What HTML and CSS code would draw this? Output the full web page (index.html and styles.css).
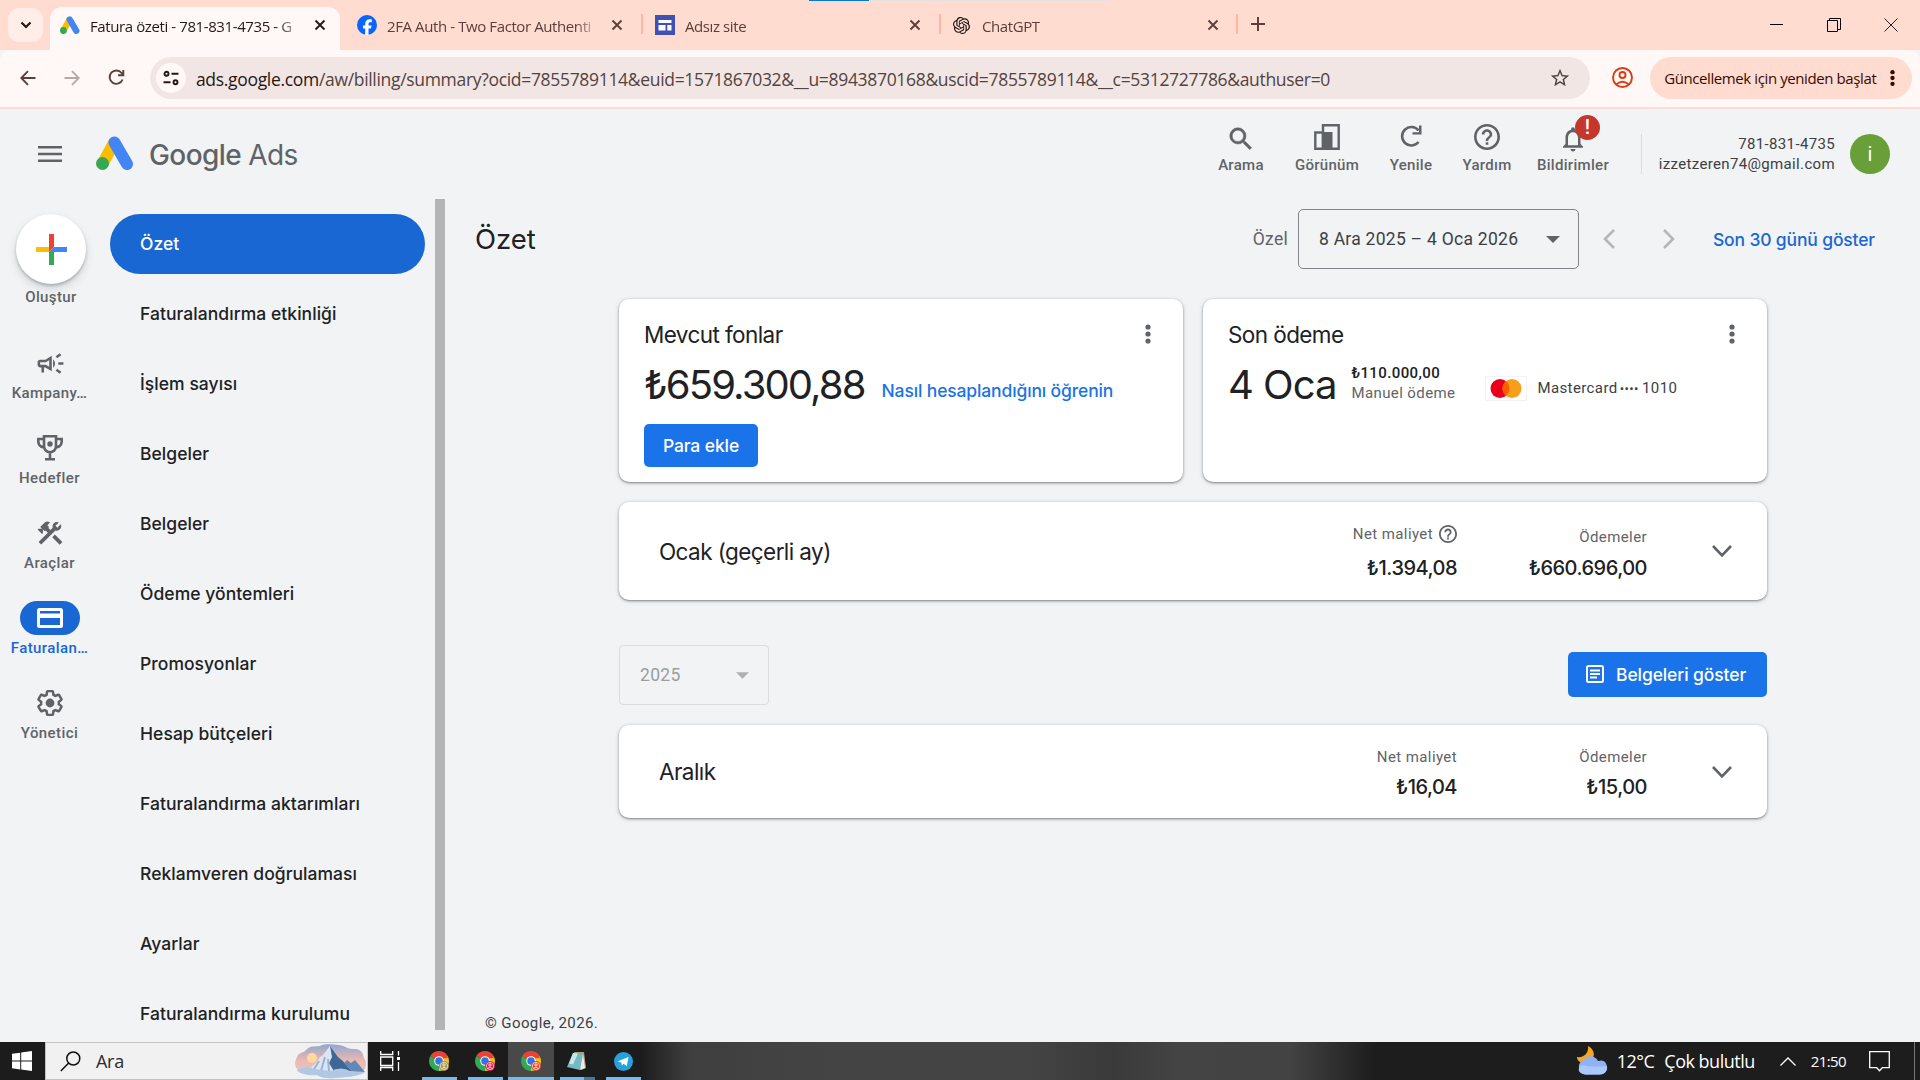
FILE: index.html
```html
<!DOCTYPE html>
<html lang="tr">

<head>
    <meta charset="UTF-8">
    <title>Fatura özeti - 781-831-4735 - Google Ads</title>
    <link rel="stylesheet" href="styles.css">
</head>

<body>

    <!-- Shared icons -->
    <svg class="defs" width="0" height="0">
        <symbol id="ads" viewBox="0 0 38 34">
            <path d="M19 5 L7 27" stroke="#fbbc04" stroke-width="12" />
            <path d="M18.5 6.5 L31 28" stroke="#4285f4" stroke-width="12" stroke-linecap="round" />
            <circle cx="6.5" cy="27.5" r="6.5" fill="#34a853" />
        </symbol>
        <symbol id="close" viewBox="0 0 12 12">
            <path d="M1.5 1.5l9 9M10.5 1.5l-9 9" stroke="currentColor" stroke-width="1.9" fill="none" />
        </symbol>
        <symbol id="more" viewBox="0 0 6 20">
            <circle cx="3" cy="3" r="2.6" fill="currentColor" />
            <circle cx="3" cy="10" r="2.6" fill="currentColor" />
            <circle cx="3" cy="17" r="2.6" fill="currentColor" />
        </symbol>
        <symbol id="help" viewBox="2 2 20 20">
            <path fill="currentColor" d="M11 18h2v-2h-2v2zm1-16C6.48 2 2 6.48 2 12s4.48 10 10 10 10-4.48 10-10S17.52 2 12 2zm0 18c-4.41 0-8-3.59-8-8s3.59-8 8-8 8 3.59 8 8-3.59 8-8 8zm0-14c-2.21 0-4 1.79-4 4h2c0-1.1.9-2 2-2s2 .9 2 2c0 2-3 1.75-3 5h2c0-2.25 3-2.5 3-5 0-2.21-1.79-4-4-4z" />
        </symbol>
        <symbol id="expand" viewBox="0 0 22 14">
            <path d="M2 2l9 9.3L20 2" stroke="currentColor" stroke-width="2.6" fill="none" />
        </symbol>
        <symbol id="chrome" viewBox="0 0 20 20">
            <path d="M10 10 L1.34 5 A10 10 0 0 1 18.66 5 Z" fill="#ea4335" />
            <path d="M10 10 L18.66 5 A10 10 0 0 1 10 20 Z" fill="#fbc116" />
            <path d="M10 10 L10 20 A10 10 0 0 1 1.34 5 Z" fill="#34a853" />
            <path d="M10 5.2h8.7v2H10z" fill="#ea4335" />
            <circle cx="10" cy="10" r="4.8" fill="#fff" />
            <circle cx="10" cy="10" r="3.8" fill="#2f74ec" />
            <circle cx="15" cy="15" r="5" fill="currentColor" />
            <circle cx="15" cy="15" r="3.7" fill="none" stroke="#fff" stroke-width=".8" opacity=".8" />
            <circle cx="15" cy="14" r="1.2" fill="none" stroke="#fff" stroke-width=".8" />
            <path d="M12.8 17.4q2.2-2 4.4 0" fill="none" stroke="#fff" stroke-width=".8" />
        </symbol>
    </svg>

    <!-- Browser tabs -->
    <div class="tab-strip">
        <div class="load-bar"></div>
        <div class="tab-search">
            <svg width="12" height="8" viewBox="0 0 12 8"><path d="M1.5 1.5L6 6l4.5-4.5" stroke="#271815" stroke-width="2.2" fill="none" /></svg>
        </div>
        <div class="tab active">
            <svg class="favicon" width="20" height="18"><use href="#ads" /></svg>
            <span class="tab-title">Fatura özeti - 781-831-4735 - G</span>
            <svg class="tab-close" width="12" height="12"><use href="#close" /></svg>
        </div>
        <div class="tab">
            <svg class="favicon" width="20" height="20" viewBox="0 0 20 20">
                <circle cx="10" cy="10" r="10" fill="#0866ff" />
                <path d="M8.2 20v-6.6H6v-3h2.2V9c0-3.3 1.5-4.8 4.7-4.8.6 0 1.4.1 1.9.2v2.8h-1.3c-1.5 0-2 .6-2 2v1.2h3l-.5 3h-2.5V20z" fill="#fff" />
            </svg>
            <span class="tab-title">2FA Auth - Two Factor Authenti</span>
            <svg class="tab-close" width="12" height="12"><use href="#close" /></svg>
        </div>
        <div class="tab separated">
            <svg class="favicon" width="20" height="20" viewBox="0 0 20 20">
                <path d="M0 0h20v20H0z" fill="#3f51b5" />
                <path d="M3.5 5h13v3h-13zM3.5 10h7v5.5h-7zM12.3 10h4.2v5.5h-4.2z" fill="#fff" />
            </svg>
            <span class="tab-title">Adsız site</span>
            <svg class="tab-close" width="12" height="12"><use href="#close" /></svg>
        </div>
        <div class="tab separated">
            <svg class="favicon gpt" width="17" height="17" viewBox="0 0 24 24"><path d="M22.2819 9.8211a5.9847 5.9847 0 0 0-.5157-4.9108 6.0462 6.0462 0 0 0-6.5098-2.9A6.0651 6.0651 0 0 0 4.9807 4.1818a5.9847 5.9847 0 0 0-3.9977 2.9 6.0462 6.0462 0 0 0 .7427 7.0966 5.98 5.98 0 0 0 .511 4.9107 6.051 6.051 0 0 0 6.5146 2.9001A5.9847 5.9847 0 0 0 13.2599 24a6.0557 6.0557 0 0 0 5.7718-4.2058 5.9894 5.9894 0 0 0 3.9977-2.9001 6.0557 6.0557 0 0 0-.7475-7.0729zm-9.022 12.6081a4.4755 4.4755 0 0 1-2.8764-1.0408l.1419-.0804 4.7783-2.7582a.7948.7948 0 0 0 .3927-.6813v-6.7369l2.02 1.1686a.071.071 0 0 1 .038.052v5.5826a4.504 4.504 0 0 1-4.4945 4.4944zm-9.6607-4.1254a4.4708 4.4708 0 0 1-.5346-3.0137l.142.0852 4.783 2.7582a.7712.7712 0 0 0 .7806 0l5.8428-3.3685v2.3324a.0804.0804 0 0 1-.0332.0615L9.74 19.9502a4.4992 4.4992 0 0 1-6.1408-1.6464zM2.3408 7.8956a4.485 4.485 0 0 1 2.3655-1.9728V11.6a.7664.7664 0 0 0 .3879.6765l5.8144 3.3543-2.0201 1.1685a.0757.0757 0 0 1-.071 0l-4.8303-2.7865A4.504 4.504 0 0 1 2.3408 7.872zm16.5963 3.8558L13.1038 8.364 15.1192 7.2a.0757.0757 0 0 1 .071 0l4.8303 2.7913a4.4944 4.4944 0 0 1-.6765 8.1042v-5.6772a.79.79 0 0 0-.407-.667zm2.0107-3.0231l-.142-.0852-4.7735-2.7818a.7759.7759 0 0 0-.7854 0L9.409 9.2297V6.8974a.0662.0662 0 0 1 .0284-.0615l4.8303-2.7866a4.4992 4.4992 0 0 1 6.6802 4.66zM8.3065 12.863l-2.02-1.1638a.0804.0804 0 0 1-.038-.0567V6.0742a4.4992 4.4992 0 0 1 7.3757-3.4537l-.142.0805L8.704 5.459a.7948.7948 0 0 0-.3927.6813zm1.0976-2.3654l2.602-1.4998 2.6069 1.4998v2.9994l-2.5974 1.4997-2.6067-1.4997Z" fill="#111" /></svg>
            <span class="tab-title">ChatGPT</span>
            <svg class="tab-close" width="12" height="12"><use href="#close" /></svg>
        </div>
        <div class="new-tab">
            <svg width="14" height="14" viewBox="0 0 14 14"><path d="M7 0v14M0 7h14" stroke="#5a403a" stroke-width="2" /></svg>
        </div>
        <div class="window-buttons">
            <svg width="14" height="14" viewBox="0 0 14 14"><path d="M0 6.5h13" stroke="#000" /></svg>
            <svg width="14" height="14" viewBox="0 0 14 14"><path d="M.5 2.5h10v11H.5zM2.5 2.5v-2h11v11h-3" stroke="#000" fill="none" /></svg>
            <svg width="14" height="14" viewBox="0 0 14 14"><path d="M.5.5l13 13M13.5.5l-13 13" stroke="#222" fill="none" /></svg>
        </div>
    </div>

    <!-- Address bar -->
    <div class="toolbar">
        <div class="nav-buttons">
            <svg width="16" height="16" viewBox="0 0 16 16"><path d="M15.5 8H1.5M8 1.2L1.3 8 8 14.8" stroke="#5a403a" stroke-width="1.9" fill="none" /></svg>
            <svg width="16" height="16" viewBox="0 0 16 16"><path d="M.5 8h14M8 1.2L14.7 8 8 14.8" stroke="#b9a9a5" stroke-width="1.9" fill="none" /></svg>
            <svg width="17" height="17" viewBox="0 0 17 17"><path d="M14.6 10.5A6.7 6.7 0 1 1 13.6 4L15 5.6" stroke="#5a403a" stroke-width="1.9" fill="none" /><path d="M15.3 1v5.2H10" stroke="#5a403a" stroke-width="1.9" fill="none" /></svg>
        </div>
        <div class="omnibox">
            <div class="site-info">
                <svg width="16" height="16" viewBox="0 0 16 16" fill="none" stroke="#271815" stroke-width="1.9"><circle cx="3.5" cy="3.8" r="2" /><path d="M8.5 3.8h7M.5 12.2h7" /><circle cx="12.5" cy="12.2" r="2" /></svg>
            </div>
            <span class="url"><b>ads.google.com</b>/aw/billing/summary?ocid=7855789114&amp;euid=1571867032&amp;__u=8943870168&amp;uscid=7855789114&amp;__c=5312727786&amp;authuser=0</span>
            <svg class="star" width="22" height="22" viewBox="0 0 24 24"><path d="M22 9.24l-7.19-.62L12 2 9.19 8.63 2 9.24l5.46 4.73L5.82 21 12 17.27 18.18 21l-1.63-7.03L22 9.24zM12 15.4l-3.76 2.27 1-4.28-3.32-2.88 4.38-.38L12 6.1l1.71 4.04 4.38.38-3.32 2.88 1 4.28L12 15.4z" fill="#534340" /></svg>
        </div>
        <svg class="profile" width="21" height="21" viewBox="0 0 21 21" fill="none" stroke="#dd3c12" stroke-width="1.9"><circle cx="10.5" cy="10.5" r="9.5" /><circle cx="10.5" cy="8" r="3" /><path d="M4.5 17.2q6-5 12 0" /></svg>
        <div class="update-button">
            <span>Güncellemek için yeniden başlat</span>
            <svg width="5" height="18" viewBox="0 0 6 20"><use href="#more" /></svg>
        </div>
    </div>

    <!-- Google Ads header -->
    <header class="header">
        <svg class="menu-icon" width="24" height="16" viewBox="0 0 24 16"><path d="M0 1.3h24M0 8h24M0 14.7h24" stroke="#5f6368" stroke-width="2.5" /></svg>
        <svg class="logo" width="38" height="34"><use href="#ads" /></svg>
        <div class="brand"><span>Google</span> Ads</div>
        <div class="actions">
            <div class="action search">
                <svg width="30" height="30" viewBox="0 0 24 24"><path d="M15.5 14h-.79l-.28-.27A6.471 6.471 0 0 0 16 9.5 6.5 6.5 0 1 0 9.5 16c1.61 0 3.09-.59 4.23-1.57l.27.28v.79l5 4.99L20.49 19l-4.99-5zm-6 0C7.01 14 5 11.99 5 9.5S7.01 5 9.5 5 14 7.01 14 9.5 11.99 14 9.5 14z" fill="#5f6368" stroke="#5f6368" stroke-width=".4" /></svg>
                <span>Arama</span>
            </div>
            <div class="action view">
                <svg width="26" height="26" viewBox="0 0 26 26"><path d="M1.3 8.5h7.5v16.2H1.3zM9 1.3h15.7v23.4H9z" stroke="#5f6368" stroke-width="2.4" fill="none" /><path d="M9 8h9.500v17H9z" fill="#5f6368" /></svg>
                <span>Görünüm</span>
            </div>
            <div class="action refresh">
                <svg width="24" height="24" viewBox="0 0 24 24"><path d="M19.5 18A9.2 9.2 0 1 1 19.5 6.500" stroke="#5f6368" stroke-width="2.6" fill="none" /><path d="M22.5 1.5v9h-9v-2.3h6.5V1.5z" fill="#5f6368" /></svg>
                <span>Yenile</span>
            </div>
            <div class="action assist">
                <svg width="26" height="26"><use href="#help" /></svg>
                <span>Yardım</span>
            </div>
            <div class="action notifications">
                <svg width="30" height="30" viewBox="0 0 24 24"><path d="M12 22c1.1 0 2-.9 2-2h-4c0 1.1.89 2 2 2zm6-6v-5c0-3.07-1.64-5.64-4.5-6.32V4c0-.83-.67-1.5-1.5-1.5s-1.5.67-1.5 1.5v.68C7.63 5.36 6 7.92 6 11v5l-2 2v1h16v-1l-2-2zm-2 1H8v-6c0-2.48 1.51-4.5 4-4.5s4 2.02 4 4.5v6z" fill="#5f6368" /></svg>
                <span>Bildirimler</span>
                <i class="badge">!</i>
            </div>
        </div>
        <div class="account">
            <div>781-831-4735</div>
            <div class="mail">izzetzeren74@gmail.com</div>
        </div>
        <div class="avatar">i</div>
    </header>

    <div class="page">

        <!-- Icon rail -->
        <nav class="rail">
            <div class="create">
                <svg width="31" height="31" viewBox="0 0 31 31">
                    <path d="M0 13h13v5H0z" fill="#fbbc04" />
                    <path d="M13 18h5v13h-5z" fill="#34a853" />
                    <path d="M13 18l5-5h13v5z" fill="#4285f4" />
                    <path d="M13 0h5v13l-5 5z" fill="#ea4335" />
                </svg>
            </div>
            <span class="create-label">Oluştur</span>
            <div class="rail-item">
                <div class="rail-icon"><svg width="31" height="31" viewBox="0 0 24 24"><path d="M18 11v2h4v-2h-4zm-2 6.61c.96.71 2.21 1.65 3.2 2.39.4-.53.8-1.07 1.2-1.6-.99-.74-2.24-1.68-3.2-2.4-.4.54-.8 1.08-1.2 1.61zM20.4 5.6c-.4-.53-.8-1.07-1.2-1.6-.99.74-2.24 1.68-3.2 2.4.4.53.8 1.07 1.2 1.6.96-.72 2.21-1.65 3.2-2.4zM4 9c-1.1 0-2 .9-2 2v2c0 1.1.9 2 2 2h1v4h2v-4h1l5 3V6L8 9H4zm5.03 1.71L11 9.53v4.94l-1.97-1.18-.48-.29H4v-2h4.55l.48-.29zM15.5 12c0-1.33-.58-2.53-1.5-3.35v6.69c.92-.81 1.5-2.01 1.5-3.34z" fill="currentColor" /></svg></div>
                <span>Kampany…</span>
            </div>
            <div class="rail-item">
                <div class="rail-icon"><svg width="26" height="26" viewBox="0 0 26 26" fill="none" stroke="currentColor" stroke-width="2.6"><path d="M7 1.3h12v10a6 6 0 0 1-12 0zM7 4H1.3v2.5Q1.3 11.5 7 12.500M19 4h5.700v2.500q0 5-5.700 6M13 17.500V24M8 24.300h10" /><circle cx="13" cy="9" r="2.700" fill="currentColor" stroke="none" /></svg></div>
                <span>Hedefler</span>
            </div>
            <div class="rail-item">
                <div class="rail-icon"><svg width="30" height="30" viewBox="0 0 24 24"><path d="M13.78 15.3L19.78 21.3 21.89 19.14 15.89 13.14 13.78 15.3M17.5 10.1C17.11 10.1 16.69 10.05 16.36 9.91L4.97 21.25 2.86 19.14 10.27 11.74 8.5 9.96 7.78 10.66 6.33 9.25V12.11L5.63 12.81 2.11 9.25 2.81 8.55H5.62L4.22 7.14 7.78 3.58C8.95 2.41 10.83 2.41 12 3.58L9.89 5.74 11.3 7.14 10.59 7.85 12.38 9.63 14.2 7.75C14.06 7.42 14 7 14 6.63 14 4.66 15.56 3.11 17.5 3.11 18.09 3.11 18.61 3.25 19.08 3.53L16.41 6.2 17.91 7.7 20.58 5.03C20.86 5.5 21 6 21 6.63 21 8.55 19.45 10.1 17.5 10.1Z" fill="currentColor" /></svg></div>
                <span>Araçlar</span>
            </div>
            <div class="rail-item selected">
                <div class="rail-icon"><svg width="26" height="20" viewBox="0 0 26 20"><rect width="26" height="20" rx="2.5" fill="#fff" /><path d="M3 3h20v2.5H3zM3 10h20v7H3z" fill="#1967d2" /></svg></div>
                <span>Faturalan…</span>
            </div>
            <div class="rail-item">
                <div class="rail-icon"><svg width="30" height="30" viewBox="0 0 24 24"><g transform="translate(.6 .6) scale(.95)"><path d="M19.43 12.98c.04-.32.07-.64.07-.98 0-.34-.03-.66-.07-.98l2.11-1.65c.19-.15.24-.42.12-.64l-2-3.46c-.09-.16-.26-.25-.44-.25-.06 0-.12.01-.17.03l-2.49 1c-.52-.4-1.08-.73-1.69-.98l-.38-2.65C14.46 2.18 14.25 2 14 2h-4c-.25 0-.46.18-.49.42l-.38 2.65c-.61.25-1.17.59-1.69.98l-2.49-1c-.06-.02-.12-.03-.18-.03-.17 0-.34.09-.43.25l-2 3.46c-.13.22-.07.49.12.64l2.11 1.65c-.04.32-.07.65-.07.98 0 .33.03.66.07.98l-2.11 1.65c-.19.15-.24.42-.12.64l2 3.46c.09.16.26.25.44.25.06 0 .12-.01.17-.03l2.49-1c.52.4 1.08.73 1.69.98l.38 2.65c.03.24.24.42.49.42h4c.25 0 .46-.18.49-.42l.38-2.65c.61-.25 1.17-.59 1.69-.98l2.49 1c.06.02.12.03.18.03.17 0 .34-.09.43-.25l2-3.46c.12-.22.07-.49-.12-.64l-2.11-1.65z" fill="none" stroke="currentColor" stroke-width="2.1" /><circle cx="12" cy="12" r="3.7" fill="currentColor" /></g></svg></div>
                <span>Yönetici</span>
            </div>
        </nav>

        <!-- Billing menu -->
        <nav class="side-menu">
            <a class="current">Özet</a>
            <a>Faturalandırma etkinliği</a>
            <a>İşlem sayısı</a>
            <a>Belgeler</a>
            <a>Belgeler</a>
            <a>Ödeme yöntemleri</a>
            <a>Promosyonlar</a>
            <a>Hesap bütçeleri</a>
            <a>Faturalandırma aktarımları</a>
            <a>Reklamveren doğrulaması</a>
            <a>Ayarlar</a>
            <a>Faturalandırma kurulumu</a>
        </nav>
        <div class="scrollbar"></div>

        <main class="content">
            <div class="title-bar">
                <h1>Özet</h1>
                <span class="range-type">Özel</span>
                <div class="date-range">
                    <span>8 Ara 2025 – 4 Oca 2026</span>
                    <svg width="14" height="7" viewBox="0 0 14 7"><path d="M0 0h14L7 7z" fill="#5f6368" /></svg>
                </div>
                <svg class="prev" width="14" height="20" viewBox="0 0 14 20"><path d="M12 1L3 10l9 9" stroke="#b4b6b9" stroke-width="2.6" fill="none" /></svg>
                <svg class="next" width="14" height="20" viewBox="0 0 14 20"><path d="M2 1l9 9-9 9" stroke="#b4b6b9" stroke-width="2.6" fill="none" /></svg>
                <a class="last-days">Son 30 günü göster</a>
            </div>

            <div class="billing">
                <div class="cards">
                    <section class="card">
                        <div class="card-head">
                            <h2>Mevcut fonlar</h2>
                            <svg width="6" height="20"><use href="#more" /></svg>
                        </div>
                        <div class="card-row">
                            <span class="amount">₺659.300,88</span>
                            <a class="learn">Nasıl hesaplandığını öğrenin</a>
                        </div>
                        <button class="add-money">Para ekle</button>
                    </section>
                    <section class="card">
                        <div class="card-head">
                            <h2>Son ödeme</h2>
                            <svg width="6" height="20"><use href="#more" /></svg>
                        </div>
                        <div class="card-row">
                            <span class="amount date">4 Oca</span>
                            <div class="payment">
                                <strong>₺110.000,00</strong>
                                <span>Manuel ödeme</span>
                            </div>
                            <svg class="mastercard" width="42" height="25" viewBox="0 0 42 25">
                                <rect x=".5" y=".5" width="41" height="24" fill="#fff" stroke="#f3f3f3" />
                                <circle cx="15" cy="12.5" r="9.5" fill="#eb001b" />
                                <circle cx="27" cy="12.5" r="9.5" fill="#f79e1b" />
                                <path d="M21 5.15a9.5 9.5 0 0 1 0 14.7 9.5 9.5 0 0 1 0-14.7z" fill="#ff5f00" />
                            </svg>
                            <span class="card-number">Mastercard <i>••••</i> 1010</span>
                        </div>
                    </section>
                </div>

                <section class="month current-month">
                    <h2>Ocak (geçerli ay)</h2>
                    <div class="figure cost">
                        <span class="label">Net maliyet <svg width="18" height="18"><use href="#help" /></svg></span>
                        <span class="value">₺1.394,08</span>
                    </div>
                    <div class="figure paid">
                        <span class="label">Ödemeler</span>
                        <span class="value">₺660.696,00</span>
                    </div>
                    <svg class="expand" width="22" height="14"><use href="#expand" /></svg>
                </section>

                <div class="filters">
                    <div class="year-select">
                        <span>2025</span>
                        <svg width="13" height="7" viewBox="0 0 14 7"><path d="M0 0h14L7 7z" fill="#aeb0b3" /></svg>
                    </div>
                    <button class="documents">
                        <svg width="18" height="18" viewBox="0 0 18 18"><rect x="1" y="1" width="16" height="16" rx="1.5" fill="none" stroke="#fff" stroke-width="2" /><path d="M4 5.5h10M4 9h10M4 12.5h7" stroke="#fff" stroke-width="1.8" /></svg>
                        Belgeleri göster
                    </button>
                </div>

                <section class="month">
                    <h2>Aralık</h2>
                    <div class="figure cost">
                        <span class="label">Net maliyet</span>
                        <span class="value">₺16,04</span>
                    </div>
                    <div class="figure paid">
                        <span class="label">Ödemeler</span>
                        <span class="value">₺15,00</span>
                    </div>
                    <svg class="expand" width="22" height="14"><use href="#expand" /></svg>
                </section>
            </div>

            <footer>© Google, 2026.</footer>
        </main>
    </div>

    <!-- Windows taskbar -->
    <div class="taskbar">
        <div class="start">
            <svg width="20" height="20" viewBox="0 0 20 20"><path d="M0 2.8L8.2 1.7v7.9H0zM9.2 1.5L20 0v9.6H9.2zM0 10.5h8.2v7.9L0 17.2zM9.2 10.5H20V20L9.2 18.5z" fill="#fff" /></svg>
        </div>
        <div class="search-box">
            <svg width="21" height="21" viewBox="0 0 21 21" fill="none" stroke="#111" stroke-width="1.5"><circle cx="13.3" cy="7.5" r="6.5" /><path d="M8.7 12L.8 20" /></svg>
            <span>Ara</span>
            <svg class="scenery" width="72" height="35" viewBox="0 0 72 35">
                <defs>
                    <linearGradient id="sky" x1="0" y1="0" x2="0" y2="1">
                        <stop offset="0" stop-color="#8ea9d2" />
                        <stop offset=".5" stop-color="#f2b8ac" />
                        <stop offset="1" stop-color="#c3d2e8" />
                    </linearGradient>
                </defs>
                <path d="M2 13C4 8 9 9 11 6c4-5 10-3 14-4 6-3 14-1 19-1 7 1 8 4 14 4 9-1 10 5 11 9 4 5 1 12-2 15-9 5-19 4-27 5-8 1-14-1-18-3-9 1-18-1-20-6-3-4-2-8 0-12z" fill="url(#sky)" />
                <circle cx="17" cy="14" r="5" fill="#ffd9a0" />
                <path d="M40 29l12-13 4 3 4-3 10 12z" fill="#6288b5" />
                <path d="M12 27l9-8 4-6 3-2 7-9 8 11 5 4 10 12z" fill="#dce6f3" />
                <path d="M35 2l8 11 5 4 10 12H40l-6-10 3-6z" fill="#3e6796" />
                <path d="M24 17l-6 10M30 13l-4 14M33 15l1 12" stroke="#9db3cf" stroke-width="2" />
                <path d="M2 26q10-5 18-1 8 1 15 2 12-5 20 0l15 1c-3 4-20 5-30 6q-12 1-18-3Q4 31 2 26z" fill="#b1c8e5" />
            </svg>
        </div>
        <div class="task-view">
            <svg width="20" height="20" viewBox="0 0 20 20" fill="none" stroke="#fff" stroke-width="1.3"><path d="M.7 0v3.500h12V0M.7 20v-3.500h12V20M.7 6h12v8.500H.7zM18.500 0v4.500M18.500 11v9" /><path d="M17 6h3v3h-3z" fill="#fff" stroke="none" /></svg>
        </div>
        <div class="task olive"><svg width="20" height="20"><use href="#chrome" /></svg></div>
        <div class="task crimson"><svg width="20" height="20"><use href="#chrome" /></svg></div>
        <div class="task orange focused"><svg width="20" height="20"><use href="#chrome" /></svg></div>
        <div class="task stacked">
            <svg width="20" height="19" viewBox="0 0 20 19"><path d="M7 0h10l2 16-5 2z" fill="#b69d70" /><path d="M6 1l10 1-3 16L0 15z" fill="#74b9c3" /><path d="M6 1l5 .5-5 11-4-1z" fill="#c5e8ec" /><path d="M16 2l2 14-5 2z" fill="#e8eef0" /></svg>
        </div>
        <div class="task">
            <svg width="19" height="19" viewBox="0 0 19 19"><circle cx="9.5" cy="9.5" r="9.5" fill="#29a0da" /><path d="M3.5 9.4l11-4.5-1.7 9.3-3.3-2.4-1.7 1.7-.4-3z" fill="#fff" /></svg>
        </div>
        <div class="tray">
            <svg class="weather" width="31" height="30" viewBox="0 0 31 30">
                <path d="M11 0c8 4 8 14-1 16C4 18 0 15 0 11c7 1 12-4 11-11z" fill="#f5a623" />
                <path d="M8 28.500A7.500 7.500 0 0 1 7 14c2-5 11-5 14 1 5-2 9 1 9 6.500 0 4-3 7-7 7z" fill="#8fb2f4" />
                <path d="M8 28.500c-8-1-8-8-2-9.500 6 2 14 2 24 1 1 5-3 8.500-7 8.500z" fill="#a9c9fb" />
            </svg>
            <span class="temp">12°C</span>
            <span class="forecast">Çok bulutlu</span>
            <svg class="caret-up" width="16" height="9" viewBox="0 0 16 9"><path d="M.5 8.500L8 1l7.500 7.500" stroke="#fff" stroke-width="1.3" fill="none" /></svg>
            <span class="clock">21:50</span>
            <svg class="notes" width="21" height="21" viewBox="0 0 21 21"><path d="M.7.7h19.600v16h-7l-2.800 3-2.800-3h-7z" stroke="#fff" stroke-width="1.3" fill="none" /></svg>
        </div>
    </div>

</body>

</html>
```
FILE: styles.css
```css
* {
    box-sizing: border-box;
}

body {
    width: 1920px;
    height: 1080px;
    margin: 0;
    display: flex;
    flex-direction: column;
    overflow: hidden;
    background-color: #f1f3f4;
    color: #202124;
    font-family: Inter, Roboto, sans-serif;
}

svg {
    display: block;
    flex: none;
}

span,
a,
strong {
    white-space: nowrap;
}

.defs {
    position: absolute;
}

/* Browser tabs */
.tab-strip {
    position: relative;
    display: flex;
    height: 50px;
    padding-left: 8px;
    background-color: #ffdbd0;
    font-family: "Open Sans", "Noto Sans", sans-serif;
    font-size: 15px;
    color: #5a403a;
}

.load-bar {
    position: absolute;
    top: 0;
    left: 809px;
    width: 301px;
    height: 1px;
    background: linear-gradient(to right, #0078d7 60px, #e5e1df 60px);
}

.tab-search {
    width: 35px;
    height: 34px;
    margin: 8px 7px 0 0;
    display: flex;
    align-items: center;
    justify-content: center;
    border-radius: 11px;
    background-color: #ffede7;
}

.tab {
    position: relative;
    display: flex;
    align-items: center;
    width: 298px;
    height: 43px;
    margin-top: 7px;
    padding: 0 15px 7px 17px;
}

.tab.active {
    width: 290px;
    padding: 0 14px 7px 10px;
    border-radius: 12px 12px 0 0;
    background-color: #fff8f6;
    color: #271815;
}

.tab.separated::before {
    content: "";
    position: absolute;
    left: 3px;
    top: 7px;
    width: 2px;
    height: 20px;
    background-color: #ffb5a0;
}

.tab-title {
    flex: 1;
    margin-left: 10px;
    padding-top: 1px;
    letter-spacing: -0.4px;
    mask-image: linear-gradient(to right, #000 188px, rgba(0, 0, 0, 0.15) 210px);
}

.gpt {
    margin-right: 2px;
}

.new-tab {
    display: flex;
    align-items: center;
    height: 20px;
    margin: 14px 0 0 2px;
    padding-left: 13px;
    border-left: 2px solid #ffb5a0;
}

.window-buttons {
    display: flex;
    gap: 43px;
    margin: 18px 22px 0 auto;
}

/* Address bar */
.toolbar {
    display: flex;
    align-items: center;
    height: 59px;
    padding: 0 8px 2px 20px;
    border-bottom: 2px solid #fbddd5;
    border-radius: 10px 10px 0 0;
    background-color: #fff8f6;
    font-family: "Open Sans", "Noto Sans", sans-serif;
}

.nav-buttons {
    display: flex;
    align-items: center;
    gap: 28px;
    width: 130px;
}

.omnibox {
    display: flex;
    align-items: center;
    width: 1441px;
    height: 42px;
    padding: 0 19px 0 6px;
    border-radius: 21px;
    background-color: #f2e6e5;
}

.site-info {
    display: flex;
    align-items: center;
    justify-content: center;
    width: 30px;
    height: 30px;
    border-radius: 50%;
    background-color: #fff8f6;
}

.url {
    margin-left: 10px;
    padding-top: 2px;
    color: #534340;
    font-size: 17.5px;
    letter-spacing: -0.315px;
}

.url b {
    font-weight: 400;
    color: #271815;
}

.star {
    margin-left: auto;
}

.profile {
    margin: 0 17px 0 22px;
}

.update-button {
    display: flex;
    align-items: center;
    justify-content: space-between;
    width: 262px;
    height: 42px;
    padding: 0 17px 0 14px;
    border-radius: 21px;
    background-color: #ffdbd0;
    color: #3b0900;
    font-size: 15px;
    letter-spacing: -0.4px;
}

/* Google Ads header */
.header {
    display: flex;
    align-items: center;
    height: 90px;
    padding: 0 30px 0 38px;
    color: #3c4043;
}

.logo {
    margin: -3px 15px 0 34px;
}

.brand {
    padding-top: 1px;
    color: #5f6368;
    font-size: 28px;
    letter-spacing: -0.6px;
}

.brand span {
    font-weight: 500;
}

.actions {
    display: flex;
    margin: -10px 0 0 auto;
    font-family: Roboto, sans-serif;
}

.action {
    position: relative;
    display: flex;
    flex-direction: column;
    align-items: center;
    justify-content: space-between;
    width: 76px;
    height: 50px;
    color: #5f6368;
    font-size: 15px;
    font-weight: 500;
    letter-spacing: 0.3px;
}

.action span {
    margin-top: auto;
    line-height: 18px;
}

.search {
    width: 80px;
}

.view {
    width: 92px;
}

.notifications {
    width: 96px;
}

.badge {
    position: absolute;
    top: -9px;
    left: 50px;
    width: 25px;
    height: 25px;
    border-radius: 50%;
    background-color: #c5372c;
    color: #fff;
    font: 500 20px/25px Roboto, sans-serif;
    text-align: center;
}

.account {
    width: 194px;
    height: 40px;
    margin-left: 20px;
    border-left: 1px solid #dadce0;
    font-family: Roboto, sans-serif;
    font-size: 15px;
    line-height: 20px;
    letter-spacing: 0.35px;
    text-align: right;
}

.avatar {
    width: 40px;
    height: 40px;
    margin-left: 15px;
    border-radius: 50%;
    background-color: #689f38;
    color: #fff;
    font: 20px/40px Roboto, sans-serif;
    text-align: center;
}

.page {
    display: flex;
    height: 843px;
}

/* Icon rail */
.rail {
    width: 100px;
    display: flex;
    flex-direction: column;
    align-items: center;
    color: #5f6368;
    font-family: Roboto, sans-serif;
    font-size: 15px;
    font-weight: 500;
    letter-spacing: 0.4px;
    line-height: 20px;
}

.create {
    width: 70px;
    height: 70px;
    margin: 15px 0 3px 2px;
    display: flex;
    align-items: center;
    justify-content: center;
    border-radius: 50%;
    background-color: #fff;
    box-shadow: 0 2px 3px rgba(60, 64, 67, 0.3), 0 5px 10px rgba(60, 64, 67, 0.15);
}

.create-label {
    margin: 0 0 39px 2px;
}

.rail-item {
    width: 80px;
    height: 85px;
    display: flex;
    flex-direction: column;
    align-items: center;
    gap: 3px;
}

.rail-item span {
    max-width: 80px;
    margin-right: 1px;
}

.rail-icon {
    width: 60px;
    height: 34px;
    display: flex;
    align-items: center;
    justify-content: center;
    border-radius: 17px;
}

.selected {
    color: #1967d2;
}

.selected .rail-icon {
    background-color: #1967d2;
}

/* Billing menu */
.side-menu {
    width: 335px;
    padding: 15px 10px 0 10px;
    overflow: hidden;
}

.side-menu a {
    display: block;
    height: 60px;
    margin-bottom: 10px;
    padding-left: 30px;
    border-radius: 30px;
    font-size: 17.5px;
    font-weight: 500;
    line-height: 60px;
    letter-spacing: 0.05px;
}

.side-menu .current {
    background-color: #1967d2;
    color: #fff;
}

.scrollbar {
    width: 10px;
    height: 831px;
    background-color: #b3b4b6;
}

/* Content */
.content {
    flex: 1;
    display: flex;
    flex-direction: column;
}

.title-bar {
    display: flex;
    align-items: center;
    height: 60px;
    margin-top: 10px;
    padding: 0 45px 0 30px;
}

h1,
h2 {
    margin: 0;
    font-weight: 400;
}

h1 {
    font-size: 27.5px;
}

h2 {
    color: #202124;
    font-size: 22.5px;
    letter-spacing: -0.58px;
}

.range-type {
    margin-left: auto;
    color: #5f6368;
    font-family: Roboto, sans-serif;
    font-size: 17.5px;
    letter-spacing: 0.25px;
}

.date-range {
    display: flex;
    align-items: center;
    justify-content: space-between;
    width: 281px;
    height: 60px;
    margin-left: 10px;
    padding: 0 18px 0 20px;
    border: 1px solid #80868b;
    border-radius: 5px;
    color: #3c4043;
    font-family: Roboto, sans-serif;
    font-size: 17.5px;
    letter-spacing: 0.27px;
}

.prev {
    margin: 0 46px 0 23px;
}

.next {
    margin-right: 37px;
}

.last-days {
    color: #1967d2;
    font-size: 17.5px;
    font-weight: 500;
    letter-spacing: -0.15px;
}

.billing {
    width: 1148px;
    margin: 30px 0 0 174px;
}

.cards {
    display: grid;
    grid-template-columns: 1fr 1fr;
    gap: 20px;
}

.card,
.month {
    border-radius: 10px;
    background-color: #fff;
    box-shadow: 0 1px 2px rgba(60, 64, 67, 0.5), 0 1px 4px rgba(60, 64, 67, 0.25);
}

.card {
    height: 183px;
    padding: 20px 25px 0;
}

.card-head {
    display: flex;
    align-items: center;
    justify-content: space-between;
    height: 30px;
    padding-right: 7px;
    color: #5f6368;
}

.card-row {
    display: flex;
    align-items: center;
    height: 75px;
    padding-bottom: 5px;
}

.amount {
    font-size: 40px;
    letter-spacing: -1.9px;
}

.amount.date {
    letter-spacing: -1px;
}

.learn {
    margin: 13px 0 0 17px;
    color: #1a73e8;
    font-size: 17.5px;
    font-weight: 500;
    letter-spacing: -0.14px;
}

button {
    border: 0;
    border-radius: 5px;
    background-color: #1a73e8;
    color: #fff;
    font: 500 17.5px Inter, sans-serif;
    letter-spacing: -0.1px;
}

.add-money {
    width: 114px;
    height: 43px;
    padding: 0 0 1px;
}

.payment {
    display: flex;
    flex-direction: column;
    width: 134px;
    margin: 0 0 3px 15px;
    color: #5f6368;
    font-family: Roboto, sans-serif;
    font-size: 15px;
    line-height: 20px;
    letter-spacing: 0.4px;
}

.payment strong {
    color: #202124;
    font-weight: 500;
}

.mastercard {
    margin-top: 8px;
}

.card-number {
    margin: 8px 0 0 10px;
    color: #3c4043;
    font-family: Roboto, sans-serif;
    font-size: 15px;
    letter-spacing: 0.4px;
}

.card-number i {
    margin: 0 -1px 0 -2px;
    font-style: normal;
    font-size: 13px;
}

/* Month rows */
.month {
    display: flex;
    align-items: center;
    height: 93px;
    padding: 0 34px 0 40px;
}

.figure {
    display: flex;
    flex-direction: column;
    align-items: flex-end;
    gap: 5px;
    margin-top: 5px;
}

.cost {
    margin-left: auto;
}

.paid {
    width: 190px;
}

.current-month {
    height: 98px;
    margin-top: 20px;
}

.current-month .cost {
    gap: 9px;
    margin-top: 4px;
}

.current-month .paid {
    gap: 6px;
    margin-top: 7px;
}

.label {
    display: flex;
    align-items: center;
    gap: 6px;
    color: #5f6368;
    font-family: Roboto, sans-serif;
    font-size: 15px;
    line-height: 20px;
    letter-spacing: 0.4px;
}

.value {
    font-size: 20px;
    font-weight: 500;
    line-height: 30px;
    letter-spacing: -0.5px;
}

.expand {
    margin-left: 64px;
    color: #5f6368;
}

.filters {
    display: flex;
    align-items: center;
    justify-content: space-between;
    height: 60px;
    margin: 45px 0 20px;
}

.year-select {
    display: flex;
    align-items: center;
    justify-content: space-between;
    width: 150px;
    height: 60px;
    padding: 0 19px 0 20px;
    border: 1px solid #dadce0;
    border-radius: 4px;
    color: #9a9da0;
    font-family: Roboto, sans-serif;
    font-size: 17.5px;
    letter-spacing: 0.3px;
}

.documents {
    display: flex;
    align-items: center;
    gap: 12px;
    width: 199px;
    height: 45px;
    margin-bottom: 2px;
    padding: 0 0 0 18px;
}

footer {
    margin: auto 0 9px 40px;
    color: #3c4043;
    font-family: Roboto, sans-serif;
    font-size: 15px;
    line-height: 20px;
    letter-spacing: 0.4px;
}

/* Windows taskbar */
.taskbar {
    display: flex;
    height: 38px;
    background: linear-gradient(to right, #1c1c1c 640px, #3f3f3f 690px, #444 830px, #444 1030px, #3a3a3a 1110px, #444 1180px, #434343 1290px, #1d1d1d 1375px);
    color: #fff;
    font-family: "Open Sans", "Noto Sans", sans-serif;
}

.start {
    width: 45px;
    padding: 9px 0 0 12px;
}

.search-box {
    display: flex;
    align-items: center;
    width: 323px;
    padding: 0 0 0 14px;
    border: 1px solid #c3c3c3;
    background-color: #f1f1f1;
    color: #2b2b2b;
    font-size: 18px;
}

.search-box span {
    margin-left: 15px;
    letter-spacing: -0.3px;
}

.scenery {
    margin-left: auto;
}

.task-view {
    width: 48px;
    padding: 9px 0 0 12px;
}

.task {
    position: relative;
    display: flex;
    align-items: center;
    justify-content: center;
    width: 46px;
}

.task::after {
    content: "";
    position: absolute;
    left: 6px;
    right: 5px;
    bottom: 0;
    height: 3px;
    background-color: #76b9ed;
}

.stacked::after {
    background: linear-gradient(to right, #76b9ed 24px, #47779c 24px);
}

.focused {
    background-color: #494949;
}

.focused::after {
    left: 0;
    right: 0;
}

.olive {
    color: #a38c4d;
}

.crimson {
    color: #d91c4b;
}

.orange {
    color: #d9472b;
}

.tray {
    display: flex;
    align-items: center;
    margin-left: auto;
    margin-right: 5px;
    padding-right: 24px;
    border-right: 1px solid #777;
    font-size: 18px;
}

.temp {
    margin: 0 10px 0 9px;
    letter-spacing: -0.5px;
}

.forecast {
    letter-spacing: -0.5px;
}

.caret-up {
    margin: 0 15px 0 25px;
}

.clock {
    margin-right: 23px;
    font-size: 15px;
    letter-spacing: -0.6px;
}
```
